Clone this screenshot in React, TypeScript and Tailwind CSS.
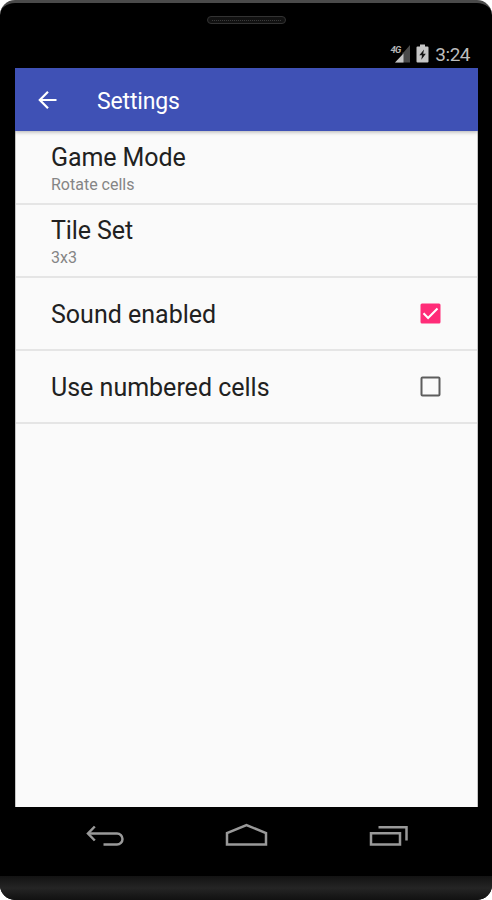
import { useState } from "react";

type ListRow = {
  title: string;
  summary: string;
};

const listRows: ListRow[] = [
  { title: "Game Mode", summary: "Rotate cells" },
  { title: "Tile Set", summary: "3x3" },
];

function StatusBar() {
  return (
    <div className="flex h-[37px] items-center justify-end pr-[8px] pt-[9px]">
      {/* 4G signal */}
      <svg width="22" height="20" viewBox="0 0 22 20" className="mr-[4px]">
        <text
          x="0.5"
          y="8.5"
          fontSize="9.5"
          fontWeight="700"
          fontStyle="italic"
          letterSpacing="-0.8"
          fill="#b4b4b4"
          fontFamily="Roboto, sans-serif"
        >
          4G
        </text>
        <path d="M20 1v17.500H5L12.500 11V8.500H13.500Z" fill="#4a4a4a" />
        <path d="M13.500 9.500V18.500H5Z" fill="#c4c4c4" />
      </svg>
      {/* Battery, charging */}
      <svg width="14" height="20" viewBox="0 0 14 20" className="mr-[5px]">
        <path
          d="M4 .5h5v2h2.500q1 0 1 1v14q0 1-1 1h-10q-1 0-1-1v-14q0-1 1-1H4Z"
          fill="#c6c6c6"
        />
        <path d="M8 5.500 3.300 11.300H6L5.300 15.700 9.800 9.800H7.200Z" fill="#151515" />
      </svg>
      <span className="pt-[2px] text-[19px] leading-[20px] tracking-[-0.5px] text-[#bdbdbd]">3:24</span>
    </div>
  );
}

function CheckRow({
  label,
  checked,
  onToggle,
}: {
  label: string;
  checked: boolean;
  onToggle: () => void;
}) {
  return (
    <button
      type="button"
      role="checkbox"
      aria-checked={checked}
      onClick={onToggle}
      className="flex h-[73px] w-full items-center justify-between border-b-2 border-[#e5e5e5] pl-[35px] pr-[36px] text-left"
    >
      <span className="pt-[3px] text-[25px] leading-[30px] text-[#212121]">{label}</span>
      {checked ? (
        <svg width="21" height="21" viewBox="0 0 21 21">
          <rect x=".5" y=".5" width="20" height="20" rx="1.500" fill="#ff2c78" />
          <path d="m3.500 10.300 4.600 4.600L17.500 5.500" fill="none" stroke="#fff" strokeWidth="2.100" />
        </svg>
      ) : (
        <svg width="21" height="21" viewBox="0 0 21 21">
          <rect x="1.500" y="1.500" width="18" height="18" rx="1" fill="none" stroke="#5d5d5d" strokeWidth="2" />
        </svg>
      )}
    </button>
  );
}

function NavBar() {
  return (
    <div className="flex h-[69px] justify-between pl-[70px] pr-[69px] pt-[15px]">
      <svg width="40" height="26" viewBox="0 0 40 26" fill="none" stroke="#999" strokeWidth="2.500">
        <path d="M3 11.500h29a5.500 5.500 0 0 1 0 11H18.500" />
        <path d="M9.800 4.500 3 11.500l6.800 7" />
      </svg>
      <svg width="46" height="26" viewBox="0 0 46 26" fill="none" stroke="#999" strokeWidth="2.500">
        <path d="M3 22.500V11L22.500 3.200 42 11v11.500Z" />
      </svg>
      <svg width="40" height="26" viewBox="0 0 40 26" fill="none" stroke="#999" strokeWidth="2.500">
        <path d="M2 11.300h29v11.200h-29Z" />
        <path d="M9.500 5.300h28V18.500" />
      </svg>
    </div>
  );
}

export default function App() {
  const [sound, setSound] = useState(true);
  const [numbered, setNumbered] = useState(false);

  return (
    <div className="h-[900px] w-[492px] bg-white font-['Roboto',sans-serif]">
      <div className="flex h-[900px] flex-col overflow-hidden rounded-[15px] border-t-[3px] border-[#4a4a4a] bg-black">
        {/* Earpiece */}
        <div className="flex h-[28px] justify-center pt-[13px]">
          <div className="flex h-[8px] w-[79px] items-center rounded-full border border-[#333] bg-[#111] px-1">
            <div className="w-full border-t border-dotted border-[#3a3a3a]" />
          </div>
        </div>

        <div className="ml-[15px] mr-[14px] flex flex-col">
          <StatusBar />
          <header className="z-10 flex h-[63px] items-center bg-[#3f51b5] text-white shadow-[0_1px_4px_rgba(0,0,0,0.3)]">
            <svg width="20" height="20" viewBox="0 0 20 20" className="ml-[23px]" fill="none" stroke="#fff" strokeWidth="2.200">
              <path d="M18.500 10H2M10 1.800 1.800 10l8.200 8.200" />
            </svg>
            <h1 className="ml-[39px] pt-[4px] text-[23px] leading-[30px] tracking-[-0.15px]">Settings</h1>
          </header>

          <main className="h-[676px] border-x border-[#c4c4c4] bg-[#fafafa] pt-px">
            {listRows.map((row) => (
              <div
                key={row.title}
                className="flex h-[73px] flex-col justify-end border-b-2 border-[#e5e5e5] pb-[7px] pl-[35px]"
              >
                <div className="text-[25px] leading-[30px] tracking-[-0.1px] text-[#212121]">{row.title}</div>
                <div className="text-[16px] leading-[23px] text-[#858585]">{row.summary}</div>
              </div>
            ))}
            <CheckRow label="Sound enabled" checked={sound} onToggle={() => setSound(!sound)} />
            <CheckRow label="Use numbered cells" checked={numbered} onToggle={() => setNumbered(!numbered)} />
          </main>

          <NavBar />
        </div>

        {/* Lower lip of the case */}
        <div className="flex-1 bg-linear-to-b from-[#131313] via-[#252525] to-[#111]" />
      </div>
    </div>
  );
}
